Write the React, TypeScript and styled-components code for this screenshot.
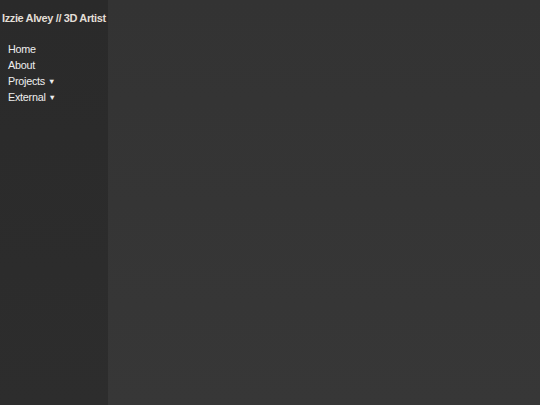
import styled, { createGlobalStyle } from 'styled-components'

const GlobalStyle = createGlobalStyle`
  html, body, #root {
    margin: 0;
    padding: 0;
    height: 100%;
  }
  body {
    background: #373737;
    font-family: "Liberation Sans", Arial, sans-serif;
  }
`

const navItems = [
  { label: 'Home' },
  { label: 'About' },
  { label: 'Projects', menu: true },
  { label: 'External', menu: true },
]

export default function App() {
  return (
    <>
      <GlobalStyle />
      <Page>
        <Sidebar>
          <Title>Izzie Alvey // 3D Artist</Title>
          <Nav>
            {navItems.map(item => (
              <NavLink key={item.label} href="#">
                {item.label}
                {item.menu && <Caret>▼</Caret>}
              </NavLink>
            ))}
          </Nav>
        </Sidebar>
        <Main />
      </Page>
    </>
  )
}

const Page = styled.div`
  display: flex;
  height: 100vh;
`

const Sidebar = styled.aside`
  width: 108px;
  flex-shrink: 0;
  background: linear-gradient(180deg, #2a2a2a 0%, #2d2d2d 100%);
  display: flex;
  flex-direction: column;
`

const Title = styled.h1`
  margin: 0;
  padding: 12px 0 0 2px;
  font-size: 11px;
  line-height: 13px;
  font-weight: bold;
  letter-spacing: -0.38px;
  color: #e2ded6;
  white-space: nowrap;
`

const Nav = styled.nav`
  display: flex;
  flex-direction: column;
  padding: 16px 0 0 8px;
`

const NavLink = styled.a`
  display: block;
  height: 16px;
  font-size: 10.8px;
  line-height: 16px;
  letter-spacing: -0.25px;
  color: #eeeeee;
  text-decoration: none;
`

const Caret = styled.span`
  display: inline-block;
  margin-left: 3px;
  font-size: 7.5px;
  line-height: 1;
  vertical-align: 1px;
`

const Main = styled.main`
  flex: 1;
  background: linear-gradient(180deg, #333333 0%, #373737 100%);
`
